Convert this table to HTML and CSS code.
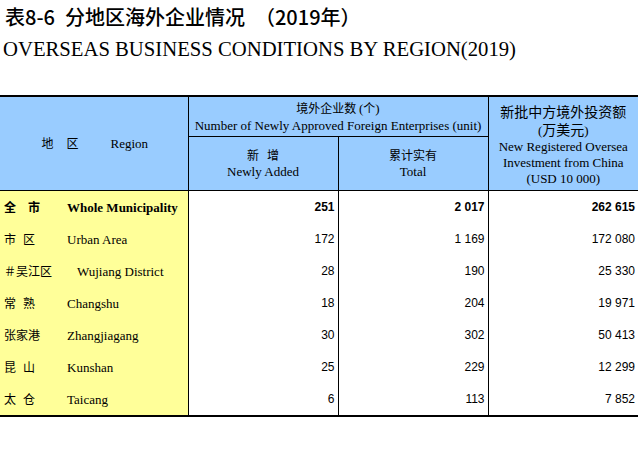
FILE: index.html
```html
<!DOCTYPE html>
<html lang="zh">
<head>
<meta charset="utf-8">
<title>表8-6 分地区海外企业情况</title>
<link rel="stylesheet" href="styles.css">
</head>
<body>
<div class="titles">
  <h1 class="title-cn">表8-6&ensp;分地区海外企业情况&ensp;（2019年）</h1>
  <h2 class="title-en">OVERSEAS BUSINESS CONDITIONS BY REGION(2019)</h2>
</div>
<table class="stats">
  <colgroup>
    <col class="c-region">
    <col class="c-num">
    <col class="c-num">
    <col class="c-inv">
  </colgroup>
  <thead>
    <tr class="h1row">
      <th rowspan="2" class="h-region"><span class="cn">地<span class="sp-h"></span>区</span><span class="en">Region</span></th>
      <th colspan="2" class="h-group"><div class="cn">境外企业数 <span class="en">(</span>个<span class="en">)</span></div><div class="en">Number of Newly Approved Foreign Enterprises (unit)</div></th>
      <th rowspan="2" class="h-inv"><div class="cn">新批中方境外投资额</div><div class="cn"><span class="en">(</span>万美元<span class="en">)</span></div><div class="en">New Registered Oversea</div><div class="en">Investment from China</div><div class="en">(USD 10 000)</div></th>
    </tr>
    <tr class="h2row">
      <th class="h-sub"><div class="cn">新<span class="sp-s"></span>增</div><div class="en">Newly Added</div></th>
      <th class="h-sub"><div class="cn">累计实有</div><div class="en">Total</div></th>
    </tr>
  </thead>
  <tbody>
    <tr class="total">
      <td class="region"><span class="cn">全<span class="sp-b"></span>市</span><span class="en">Whole Municipality</span></td>
      <td class="num">251</td><td class="num">2 017</td><td class="num">262 615</td>
    </tr>
    <tr>
      <td class="region"><span class="cn">市<span class="sp"></span>区</span><span class="en">Urban Area</span></td>
      <td class="num">172</td><td class="num">1 169</td><td class="num">172 080</td>
    </tr>
    <tr>
      <td class="region"><span class="cn">＃吴江区</span><span class="en en-sub">Wujiang District</span></td>
      <td class="num">28</td><td class="num">190</td><td class="num">25 330</td>
    </tr>
    <tr>
      <td class="region"><span class="cn">常<span class="sp"></span>熟</span><span class="en">Changshu</span></td>
      <td class="num">18</td><td class="num">204</td><td class="num">19 971</td>
    </tr>
    <tr>
      <td class="region"><span class="cn">张家港</span><span class="en">Zhangjiagang</span></td>
      <td class="num">30</td><td class="num">302</td><td class="num">50 413</td>
    </tr>
    <tr>
      <td class="region"><span class="cn">昆<span class="sp"></span>山</span><span class="en">Kunshan</span></td>
      <td class="num">25</td><td class="num">229</td><td class="num">12 299</td>
    </tr>
    <tr>
      <td class="region"><span class="cn">太<span class="sp"></span>仓</span><span class="en">Taicang</span></td>
      <td class="num">6</td><td class="num">113</td><td class="num">7 852</td>
    </tr>
  </tbody>
</table>
</body>
</html>
```

FILE: styles.css
```css
html, body {
  margin: 0;
  padding: 0;
  background: #ffffff;
  color: #000000;
}

.titles {
  height: 95px;
}

.title-cn {
  margin: 0;
  padding-top: 2px;
  padding-left: 5px;
  font-family: "Noto Sans CJK SC", sans-serif;
  font-weight: 500;
  font-size: 20px;
  line-height: 30px;
  white-space: nowrap;
}

.title-en {
  margin: 0;
  padding-top: 2px;
  padding-left: 3px;
  font-family: "Liberation Serif", serif;
  font-weight: normal;
  font-size: 20.7px;
  line-height: 30px;
  white-space: nowrap;
}

.stats {
  width: 638px;
  table-layout: fixed;
  border-collapse: collapse;
  border-top: 2px solid #000;
  border-bottom: 2px solid #000;
}

.c-region { width: 188px; }
.c-num { width: 150px; }
.c-inv { width: 150px; }

.cn {
  font-family: "Noto Sans CJK SC", sans-serif;
}

.en {
  font-family: "Liberation Serif", serif;
}

.stats th {
  background: #99ccff;
  font-weight: normal;
  font-size: 12px;
  padding: 0;
  text-align: center;
  vertical-align: middle;
  border: 1px solid #000;
  border-top: none;
  line-height: 17px;
}

.stats th:first-child,
.stats td:first-child {
  border-left: none;
}

.stats th:last-child,
.stats td:last-child {
  border-right: none;
}

.stats th .en {
  font-size: 13px;
}

.h1row { height: 40px; }
.h2row { height: 54px; }

.h-region {
  border-bottom: 1px solid #000;
}

.h-region .cn {
  display: inline-block;
  margin-right: 32px;
  margin-left: 2px;
}

.h-region .en {
  font-size: 13px;
}

.sp-h {
  display: inline-block;
  width: 13px;
}

.sp-s {
  display: inline-block;
  width: 8px;
}

.h-inv {
  padding-top: 3px !important;
}

.h-inv .cn {
  font-size: 14px;
  line-height: 18px;
}

.h-inv .en {
  line-height: 16px;
}

.h-sub {
  line-height: 16px;
}

.h-sub .cn {
  font-size: 12px;
}

.stats td {
  height: 31px;
  padding: 1px 0 0 0;
  border-left: 1px solid #000;
  border-right: 1px solid #000;
  vertical-align: middle;
}

.region {
  background: #ffff99;
  padding-left: 4px !important;
  white-space: nowrap;
}

.region .cn {
  display: inline-block;
  width: 63px;
  font-size: 12px;
}

.region .en {
  font-size: 13px;
}

.region .en-sub {
  margin-left: 10px;
}

.sp {
  display: inline-block;
  width: 7px;
}

.sp-b {
  display: inline-block;
  width: 12px;
}

.num {
  text-align: right;
  padding-right: 3px !important;
  font-family: "Liberation Sans", Arial, sans-serif;
  font-size: 12px;
}

.total td {
  font-weight: bold;
}
```
